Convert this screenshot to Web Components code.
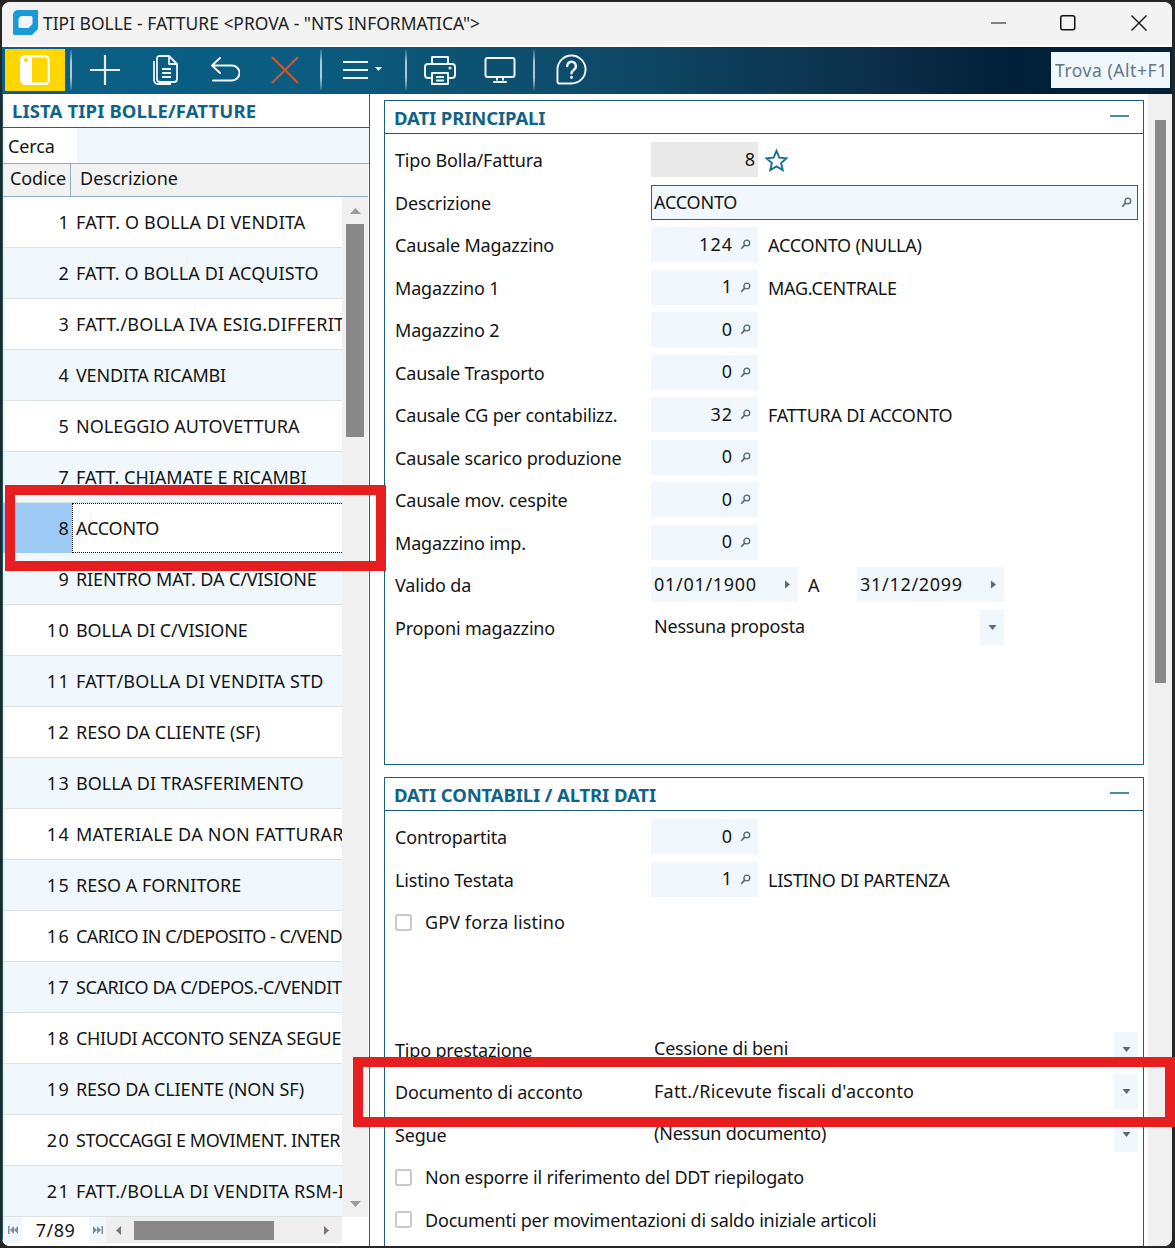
<!DOCTYPE html>
<html lang="it"><head><meta charset="utf-8"><title>Tipi bolle</title>
<style>html,body{margin:0;padding:0;background:#262626}body{font-family:"Noto Sans","Open Sans",sans-serif;font-size:18px;color:#151515}</style>
</head><body>
<tipi-app></tipi-app>
<script>
function def(name, css, html){
  customElements.define(name, class extends HTMLElement{
    constructor(){super();const r=this.attachShadow({mode:'open'});
      const h=typeof html==='function'?html(this):html;
      r.innerHTML='<style>'+css+'</style>'+h;}
  });
}
const ic={
 search:'<svg width="11" height="11" viewBox="0 0 11 11" fill="none" stroke="#4d6475" stroke-width="1.3"><circle cx="6.8" cy="4" r="2.9"/><path d="M4.7 6.1L1.2 9.8" stroke-width="1.6"/></svg>',
 down:'<svg width="9" height="5" viewBox="0 0 9 5"><path d="M.5 0h8L4.5 5z" fill="#5a6878"/></svg>',
 right:'<svg width="5" height="9" viewBox="0 0 5 9"><path d="M0 .5v8L5 4.500z" fill="#5a6878"/></svg>'
};
def('title-bar',`:host{display:flex;align-items:center;height:41px;padding-bottom:2px;background:#f3f3f3;border-radius:8px 8px 0 0;border-bottom:2px solid #fff;padding-left:11px;font-size:17.440px;color:#222}
 span{margin-left:5px;white-space:nowrap;flex:1}svg{display:block}.w{width:71px;display:flex;justify-content:center}`,
 `<svg width="25" height="25" viewBox="0 0 25 25"><path d="M5 0h20v19l-6 6H2a2 2 0 0 1-2-2V5a5 5 0 0 1 5-5z" fill="#1b9ad8"/><path d="M9 6h9a1.500 1.500 0 0 1 1.500 1.500V14l-4 4H7a1.500 1.500 0 0 1-1.500-1.500V10A4 4 0 0 1 9 6z" fill="#f3f6f8"/></svg>
 <span>TIPI BOLLE - FATTURE &lt;PROVA - "NTS INFORMATICA"&gt;</span>
 <div class="w" style="margin-right:-2px"><svg width="16" height="16" viewBox="0 0 16 16"><path d="M0 8h15" stroke="#111" stroke-width="1.200"/></svg></div>
 <div class="w"><svg width="16" height="16" viewBox="0 0 16 16"><rect x=".75" y=".75" width="14" height="14" rx="2" fill="none" stroke="#111" stroke-width="1.500"/></svg></div>
 <div class="w" style="margin-right:-2px"><svg width="16" height="16" viewBox="0 0 16 16"><path d="M.5.500l15 15M15.500.500l-15 15" stroke="#111" stroke-width="1.400"/></svg></div>`);
def('tool-btn',`:host{display:flex;width:60px;height:45px;align-items:center;justify-content:center;flex:none}svg{display:block}`,
 t=>`<slot></slot>`);
def('tool-sep',`:host{display:block;flex:none;width:2px;height:40px;align-self:center;background:linear-gradient(#ffffff22,#ffffffaa 30%,#ffffffaa 70%,#ffffff22)}`,'');
def('tool-bar',`:host{display:flex;height:45px;padding-bottom:2px;align-items:center;background:linear-gradient(90deg,#0b5f86 0,#0a5c80 300px,#0e4a68 600px,#0b2c46 900px,#001f38 1010px,#02223c 1170px)}
 .y{flex:none;margin-left:3px;width:60px;height:42px;background:#ffd600;display:flex;align-items:center;justify-content:center}
 svg{display:block}
 .tr{margin-left:auto;margin-right:2px;width:115px;padding-left:4px;height:36px;background:#f0f8fd;color:#657785;display:flex;align-items:center;font-size:17.500px;letter-spacing:.55px;white-space:nowrap;overflow:hidden}`,
 `<div class="y"><svg width="30" height="30" viewBox="0 0 30 30"><rect x="1.200" y="1.200" width="27.600" height="27.600" rx="4" fill="none" stroke="#fff" stroke-width="2.400"/><path d="M5 1h7v28H5a4 4 0 0 1-4-4V5a4 4 0 0 1 4-4z" fill="#fff"/><circle cx="6" cy="5" r="2" fill="#ffd600"/></svg></div>
 <tool-sep style="margin-left:5px"></tool-sep>
 <tool-btn style="margin-left:3px"><svg width="32" height="32" viewBox="0 0 32 32" stroke="#e8eef2" stroke-width="2.200" fill="none"><path d="M16 1v30M1 16h30"/></svg></tool-btn>
 <tool-btn><svg width="26" height="30" viewBox="0 0 26 30" stroke="#eef3f6" stroke-width="1.800" fill="none" stroke-linejoin="round"><path d="M5 3.500A2.500 2.500 0 0 1 7.500 1H17l8 8v15a3 3 0 0 1-3 3H8a3 3 0 0 1-3-3z" /><path d="M2 6v19a4 4 0 0 0 4 4h13"/><path d="M17 1v8h8M10 14h9M10 18h9M10 22h9"/></svg></tool-btn>
 <tool-btn><svg width="30" height="26" viewBox="0 0 30 26" stroke="#eef3f6" stroke-width="2" fill="none" stroke-linecap="round" stroke-linejoin="round"><path d="M10 1L2 8.500l8 7.500M2 8.500h20a6.500 6.500 0 0 1 0 15H3"/></svg></tool-btn>
 <tool-btn><svg width="28" height="28" viewBox="0 0 28 28" stroke="#c9572b" stroke-width="2.400" fill="none"><path d="M1 1l26 26M27 1L1 27"/></svg></tool-btn>
 <tool-sep style="margin-left:5px"></tool-sep>
 <tool-btn style="width:83px"><svg width="46" height="20" viewBox="0 0 46 20" fill="#eef3f6"><path d="M2 1h25v2H2zM2 9h25v2H2zM2 17h25v2H2z"/><path d="M34 7h7l-3.500 4z"/></svg></tool-btn>
 <tool-sep></tool-sep>
 <tool-btn style="margin-left:3px"><svg width="32" height="30" viewBox="0 0 32 30" stroke="#eef3f6" stroke-width="2" fill="none" stroke-linejoin="round"><path d="M8 9V2h16v7M8 23H4a3 3 0 0 1-3-3v-8a3 3 0 0 1 3-3h24a3 3 0 0 1 3 3v8a3 3 0 0 1-3 3h-4"/><path d="M8 18h16v11H8zM12 22h8M12 25.500h8"/><circle cx="26" cy="13" r=".6"/></svg></tool-btn>
 <tool-btn><svg width="32" height="26" viewBox="0 0 32 26" stroke="#eef3f6" stroke-width="2" fill="none" stroke-linejoin="round"><rect x="1.500" y="1" width="29" height="19" rx="2"/><path d="M13 20v3.500M19 20v3.500M9 25h14"/></svg></tool-btn>
 <tool-sep style="margin-left:3px"></tool-sep>
 <tool-btn style="margin-left:6px"><svg width="31" height="31" viewBox="0 0 32 32" stroke="#eef3f6" stroke-width="2" fill="none" stroke-linecap="round" stroke-linejoin="round"><path d="M16 1.500A14.500 14.500 0 1 1 16 30.500H4a2.500 2.500 0 0 1-2.500-2.500V16A14.500 14.500 0 0 1 16 1.500z"/><path d="M11.500 12.500a4.500 4.500 0 1 1 7 3.700c-1.500 1-2.500 1.800-2.500 3.600" stroke-width="2.600"/><path d="M16 24v.2" stroke-width="3"/></svg></tool-btn>
 <div class="tr">Trova (Alt+F1</div>`);
def('list-row',`:host{display:flex;height:50px;border-bottom:1px solid #dde2e5;background:#fff;align-items:center;white-space:nowrap;overflow:hidden;flex:none}
 :host([alt]){background:#f0f8fd}
 .c{width:67px;padding-right:2px;text-align:right;flex:none;line-height:50px;letter-spacing:1.3px;box-sizing:content-box}
 .d{flex:1;padding-left:4px;line-height:50px;overflow:hidden}
 :host([sel]){background:#f0f8fd;border-bottom-color:#f0f8fd}
 :host([sel]) .c{background:#9ccaf5}
 :host([sel]) .d{background:#fff;height:48px;line-height:48px;border:1px dotted #111;border-right:0;padding-left:3px}`,
 t=>`<div class="c">${t.getAttribute('c')}</div><div class="d" style="letter-spacing:${t.getAttribute('ls')||0}px">${t.getAttribute('d')}</div>`);
const rows=[[1,'FATT. O BOLLA DI VENDITA',.17],[2,'FATT. O BOLLA DI ACQUISTO',.08],[3,'FATT./BOLLA IVA ESIG.DIFFERIT',.2],[4,'VENDITA RICAMBI',-.2],[5,'NOLEGGIO AUTOVETTURA'],[7,'FATT. CHIAMATE E RICAMBI'],[8,'ACCONTO',-.2],[9,'RIENTRO MAT. DA C/VISIONE',-.12],[10,'BOLLA DI C/VISIONE',-.1],[11,'FATT/BOLLA DI VENDITA STD',.2],[12,'RESO DA CLIENTE (SF)'],[13,'BOLLA DI TRASFERIMENTO'],[14,'MATERIALE DA NON FATTURAR',.26],[15,'RESO A FORNITORE'],[16,'CARICO IN C/DEPOSITO - C/VEND',-.52],[17,'SCARICO DA C/DEPOS.-C/VENDIT',-.42],[18,'CHIUDI ACCONTO SENZA SEGUE',-.32],[19,'RESO DA CLIENTE (NON SF)',-.1],[20,'STOCCAGGI E MOVIMENT. INTER',-.42],[21,'FATT./BOLLA DI VENDITA RSM-I',.2]];
def('list-panel',`:host{display:flex;flex-direction:column;width:366px;flex:none;background:#fff;border-left:1px solid #0f5a78;border-right:1px solid #1c6480;height:100%;overflow:hidden}
 .h{height:33px;border-bottom:1px solid #1c6480;display:flex;align-items:center;padding-left:9px;font-weight:700;color:#0f6388;font-size:18.500px;letter-spacing:.12px;white-space:nowrap;box-sizing:content-box}
 .cerca{height:35px;border-bottom:1px solid #8fb0c2;display:flex;align-items:center}
 .cerca b{font-weight:400;padding-left:5px;flex:none;box-sizing:border-box;width:74px;letter-spacing:-.15px}.cerca i{flex:1;height:35px;background:#f0f8fd}
 .cols{height:32px;border-bottom:1px solid #8fb0c2;background:#f2f2f2;display:flex;align-items:center;margin-right:1px}
 .cols b{font-weight:400}.cols .a{width:68px;height:32px;line-height:29px;padding-left:7px;box-sizing:border-box;border-right:1px solid #8fb0c2;flex:none;letter-spacing:-.1px}.cols .e{padding-left:9px;line-height:29px;height:32px}
 .body{display:flex;height:1020px}
 .rows{width:339px;display:flex;flex-direction:column;overflow:hidden;flex:none}
 .vs{width:26px;background:#f0f0f0;display:flex;flex-direction:column;align-items:center;flex:none}
 .vs .up,.vs .dn{height:27px;display:flex;align-items:center;flex:none}
 .vs .th{width:18px;height:213px;background:#888;flex:none}
 .vs .sp{flex:1}
 .nav{display:flex;height:26px;align-items:stretch;font-size:18px}
 .nb{width:19px;display:flex;align-items:center;justify-content:center;background:#f0f8fd;flex:none}
 .pg{width:67px;text-align:center;line-height:26px;flex:none;background:#fff;letter-spacing:.5px}
 .hs{width:236px;background:#eee;display:flex;align-items:center;flex:none;padding-left:10px;box-sizing:border-box}
 .hs .t{width:140px;height:19px;background:#888;margin-left:13px;margin-right:50px;flex:none}
 svg{display:block}`,
 ()=>`<div class="h">LISTA TIPI BOLLE/FATTURE</div>
 <div class="cerca"><b>Cerca</b><i></i></div>
 <div class="cols"><b class="a">Codice</b><b class="e">Descrizione</b></div>
 <div class="body"><div class="rows">${rows.map((r,i)=>`<list-row c="${r[0]}" d="${r[1]}" ls="${r[2]||0}" ${r[0]==8?'sel':''} ${i%2?'alt':''}></list-row>`).join('')}</div>
 <div class="vs"><div class="up"><svg width="11" height="6" viewBox="0 0 11 6"><path d="M0 6h11L5.500 0z" fill="#9a9a9a"/></svg></div><div class="th"></div><div class="sp"></div><div class="dn"><svg width="11" height="6" viewBox="0 0 11 6"><path d="M0 0h11L5.500 6z" fill="#9a9a9a"/></svg></div></div></div>
 <div class="nav"><div class="nb"><svg width="10" height="8" viewBox="0 0 10 8" fill="#7c8b98"><path d="M0 0h1.500v8H0zM6 0v8L2 4zM10 0v8L6 4z"/></svg></div><div class="pg">7/89</div><div class="nb" style="background:#f0f8fd;width:17px"><svg width="10" height="8" viewBox="0 0 10 8" fill="#7c8b98"><path d="M10 0H8.500v8H10zM4 0v8l4-4zM0 0v8l4-4z"/></svg></div>
 <div class="hs"><svg width="5" height="9" viewBox="0 0 5 9"><path d="M5 0v9L0 4.500z" fill="#777"/></svg><div class="t"></div><svg width="5" height="9" viewBox="0 0 5 9"><path d="M0 0v9l5-4.500z" fill="#777"/></svg></div></div>`);
def('data-panel',`:host{display:block;width:758px;border:1px solid #1c5f7c;background:#fff;flex:none}
 .h{height:32px;border-bottom:1px solid #1c5f7c;display:flex;align-items:center;padding-left:9px;color:#0f6388;font-weight:700;font-size:18.500px;letter-spacing:-.12px;white-space:nowrap}
 .h i{margin-left:auto;margin-right:14px;width:19px;height:2px;background:#4a8aa5;position:relative;top:-1px}
 .b{padding:5px 5px 0 10px;display:grid;grid-auto-rows:42.500px}`,
 t=>`<div class="h">${t.getAttribute('title')}<i></i></div><div class="b"><slot></slot></div>`);
def('form-row',`:host{display:flex;align-items:center;height:42.500px;white-space:nowrap}
 .l{width:256px;flex:none;letter-spacing:-.17px}`,
 t=>`<div class="l">${t.getAttribute('label')}</div><slot></slot>`);
def('num-field',`:host{display:flex;align-items:center;justify-content:flex-end;width:107px;height:35px;background:#f0f8fd;flex:none;margin-top:-1px;box-sizing:border-box;letter-spacing:1px}
 :host([ro]){background:#e9e9e9;padding-right:2px}
 span{position:relative;top:-1px}
 .s{width:25px;display:flex;justify-content:center;flex:none}
 svg{display:block}`,
 t=>`<span>${t.getAttribute('v')}</span>${t.hasAttribute('ro')?'':`<div class="s">${ic.search}</div>`}`);
def('side-text',`:host{display:block;margin-left:10px;white-space:nowrap;letter-spacing:-.24px}`,'<slot></slot>');
def('star-mark',`:host{display:block;margin-left:7px;height:23px}svg{display:block}`,
 `<svg width="23" height="23" viewBox="0 0 24 24"><path d="M12 2l3 7 7.500.700-5.700 5 1.700 7.300L12 18.200 5.500 22l1.700-7.300-5.700-5L9 9z" fill="none" stroke="#1b6f95" stroke-width="2" stroke-linejoin="miter"/></svg>`);
def('text-field',`:host{display:flex;align-items:center;width:487px;height:35px;box-sizing:border-box;background:#f0f8fd;border:1px solid #1c6480;padding-left:2px;margin-top:-1px;letter-spacing:-.2px}span{flex:1}.s{width:22px;display:flex;justify-content:center}svg{display:block}`,
 t=>`<span>${t.getAttribute('v')}</span><div class="s">${ic.search}</div>`);
def('date-field',`:host{display:flex;align-items:center;width:147px;height:35px;box-sizing:border-box;background:#f0f8fd;padding-left:3px;margin-top:-1px;flex:none;letter-spacing:.7px}span{flex:1;position:relative;top:-1px}.s{width:22px;display:flex;justify-content:center}svg{display:block}`,
 t=>`<span>${t.getAttribute('v')}</span><div class="s">${ic.right}</div>`);
def('combo-field',`:host{display:flex;align-items:center;height:35px;padding-left:3px;margin-top:-1px;flex:none;box-sizing:border-box;letter-spacing:-.22px}span{flex:1;position:relative;top:-1px}.s{width:24px;height:35px;background:#f0f8fd;display:flex;align-items:center;justify-content:center}svg{display:block}`,
 t=>`<span>${t.getAttribute('v')}</span><div class="s">${ic.down}</div>`);
def('check-row',`:host{display:flex;align-items:center;height:42.500px;white-space:nowrap;letter-spacing:-.2px}i{width:13px;height:13px;border:2px solid #c9c9c9;border-radius:3px;background:#fff;margin-right:13px;flex:none}`,
 t=>`<i></i><span>${t.getAttribute('label')}</span>`);
def('red-box',`:host{display:block;position:absolute;box-sizing:border-box;border:10px solid #e61e1f;pointer-events:none}`,'');
def('tipi-app',`:host{display:block;position:relative;width:1175px;height:1248px;overflow:hidden;background:#262626;box-sizing:border-box;padding:2px 3px 2px 2px}
 .win{height:1244px;background:#fff;border-radius:8px;overflow:hidden;display:flex;flex-direction:column}
 .main{display:flex;height:1152px;overflow:hidden}
 .forms{width:778px;flex:none;box-sizing:border-box;padding:6px 0 0 14px;display:flex;flex-direction:column;gap:12px;overflow:hidden;height:100%}
 .p1{height:663px;box-sizing:content-box}
 .p2{height:520px}
 .vs{width:24px;background:#f0f0f0;flex:none;padding:26px 6px 0 7px;box-sizing:border-box}
 .vs div{height:563px;background:#888}`,
 `<div class="win"><title-bar></title-bar><tool-bar></tool-bar>
 <div class="main"><list-panel></list-panel>
 <div class="forms">
 <data-panel class="p1" title="DATI PRINCIPALI">
  <form-row label="Tipo Bolla/Fattura"><num-field ro v="8"></num-field><star-mark></star-mark></form-row>
  <form-row label="Descrizione"><text-field v="ACCONTO"></text-field></form-row>
  <form-row label="Causale Magazzino"><num-field v="124"></num-field><side-text>ACCONTO (NULLA)</side-text></form-row>
  <form-row label="Magazzino 1"><num-field v="1"></num-field><side-text>MAG.CENTRALE</side-text></form-row>
  <form-row label="Magazzino 2"><num-field v="0"></num-field></form-row>
  <form-row label="Causale Trasporto"><num-field v="0"></num-field></form-row>
  <form-row label="Causale CG per contabilizz."><num-field v="32"></num-field><side-text>FATTURA DI ACCONTO</side-text></form-row>
  <form-row label="Causale scarico produzione"><num-field v="0"></num-field></form-row>
  <form-row label="Causale mov. cespite"><num-field v="0"></num-field></form-row>
  <form-row label="Magazzino imp."><num-field v="0"></num-field></form-row>
  <form-row label="Valido da"><date-field v="01/01/1900"></date-field><side-text style="width:49px">A</side-text><date-field v="31/12/2099"></date-field></form-row>
  <form-row label="Proponi magazzino"><combo-field style="width:353px" v="Nessuna proposta"></combo-field></form-row>
 </data-panel>
 <data-panel class="p2" title="DATI CONTABILI / ALTRI DATI">
  <form-row label="Contropartita"><num-field v="0"></num-field></form-row>
  <form-row label="Listino Testata"><num-field v="1"></num-field><side-text>LISTINO DI PARTENZA</side-text></form-row>
  <check-row style="letter-spacing:.1px" label="GPV forza listino"></check-row>
  <div></div><div></div>
  <form-row label="Tipo prestazione"><combo-field style="width:487px" v="Cessione di beni"></combo-field></form-row>
  <form-row label="Documento di acconto"><combo-field style="width:487px;letter-spacing:.22px" v="Fatt./Ricevute fiscali d'acconto"></combo-field></form-row>
  <form-row label="Segue"><combo-field style="width:487px" v="(Nessun documento)"></combo-field></form-row>
  <check-row label="Non esporre il riferimento del DDT riepilogato"></check-row>
  <check-row label="Documenti per movimentazioni di saldo iniziale articoli"></check-row>
 </data-panel>
 </div>
 <div class="vs"><div></div></div>
 </div></div>
 <red-box style="left:5px;top:485px;width:381px;height:86px"></red-box>
 <red-box style="left:353px;top:1057px;width:822px;height:70px"></red-box>`);
</script>
</body></html>
